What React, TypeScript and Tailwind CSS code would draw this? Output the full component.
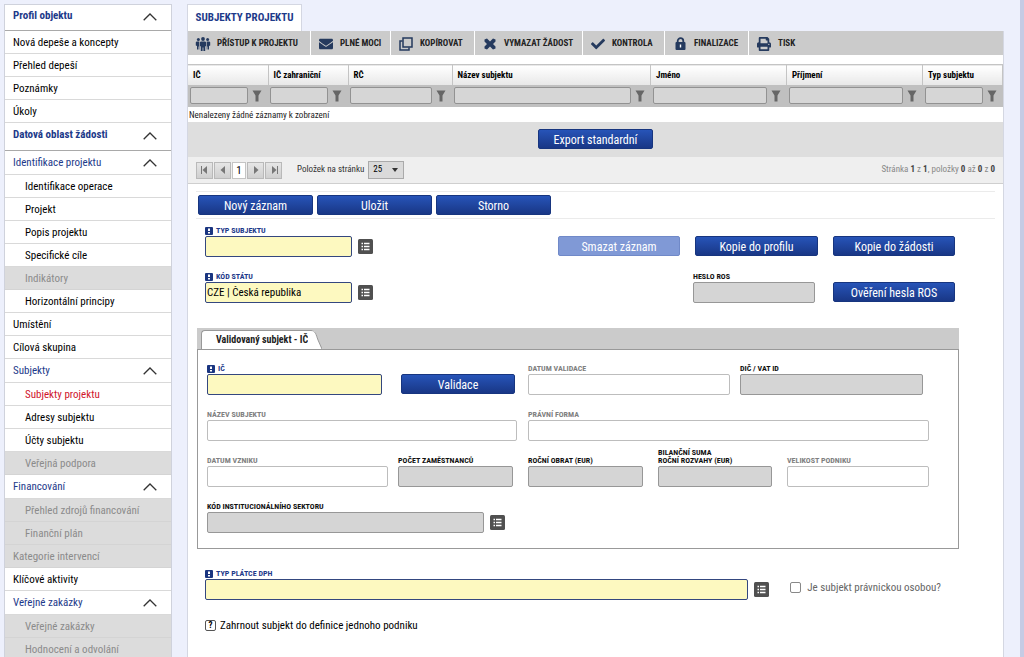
import { useId, type ReactNode } from "react";
import clsx from "clsx";
import { FaCheck, FaEnvelope, FaPrint } from "react-icons/fa";

type NavItem = {
  label: string;
  kind?: "section" | "group";
  child?: boolean;
  disabled?: boolean;
  active?: boolean;
};

const NAV: NavItem[] = [
  { label: "Profil objektu", kind: "section" },
  { label: "Nová depeše a koncepty" },
  { label: "Přehled depeší" },
  { label: "Poznámky" },
  { label: "Úkoly" },
  { label: "Datová oblast žádosti", kind: "section" },
  { label: "Identifikace projektu", kind: "group" },
  { label: "Identifikace operace", child: true },
  { label: "Projekt", child: true },
  { label: "Popis projektu", child: true },
  { label: "Specifické cíle", child: true },
  { label: "Indikátory", child: true, disabled: true },
  { label: "Horizontální principy", child: true },
  { label: "Umístění" },
  { label: "Cílová skupina" },
  { label: "Subjekty", kind: "group" },
  { label: "Subjekty projektu", child: true, active: true },
  { label: "Adresy subjektu", child: true },
  { label: "Účty subjektu", child: true },
  { label: "Veřejná podpora", child: true, disabled: true },
  { label: "Financování", kind: "group" },
  { label: "Přehled zdrojů financování", child: true, disabled: true },
  { label: "Finanční plán", child: true, disabled: true },
  { label: "Kategorie intervencí", disabled: true },
  { label: "Klíčové aktivity" },
  { label: "Veřejné zakázky", kind: "group" },
  { label: "Veřejné zakázky", child: true, disabled: true },
  { label: "Hodnocení a odvolání", child: true, disabled: true },
];

const COLUMNS = [
  { label: "IČ", width: "w-20" },
  { label: "IČ zahraniční", width: "w-20" },
  { label: "RČ", width: "w-26" },
  { label: "Název subjektu", width: "w-auto" },
  { label: "Jméno", width: "w-34" },
  { label: "Příjmení", width: "w-34" },
  { label: "Typ subjektu", width: "w-20" },
];

function PeopleIcon() {
  return (
    <svg viewBox="0 0 16 14" className="h-3.5 w-4" fill="currentColor" aria-hidden="true">
      <circle cx="3.4" cy="2.4" r="1.5" />
      <circle cx="12.6" cy="2.4" r="1.5" />
      <circle cx="8" cy="2" r="1.9" />
      <path d="M1.6 4.4h2.7v8.2H3.6V9.4h-.5v3.2H2V9L.8 8.6V5.3z" />
      <path d="M14.4 4.4h-2.7v8.2h.7V9.4h.5v3.2H14V9l1.2-.4V5.3z" />
      <path d="M5.8 4.4h4.4l.9.9v4h-.9V14H8.4v-3.6h-.8V14H5.8V9.3h-.9v-4z" />
    </svg>
  );
}

function CopyIcon() {
  return (
    <svg viewBox="0 0 14 14" className="size-3.5" fill="none" stroke="currentColor" strokeWidth="1.5" aria-hidden="true">
      <path d="M4 1h9v9H4z" />
      <path d="M3.500 4H1v9h9v-2.500" />
    </svg>
  );
}

function CrossIcon() {
  return (
    <svg viewBox="0 0 12 12" className="size-3" fill="currentColor" aria-hidden="true">
      <path d="M.5 1.500 3 .5l3 3 3-3 2.500 1v2L9 6l2.500 2.500v2l-2.500 1-3-3-3 3-2.500-1v-2L3 6 .5 3.500z" />
    </svg>
  );
}

function LockIcon() {
  return (
    <svg viewBox="0 0 11 13" className="h-[13px] w-[11px]" aria-hidden="true">
      <path d="M2.700 6V4a2.800 2.800 0 0 1 5.600 0v2" fill="none" stroke="currentColor" strokeWidth="1.800" />
      <rect x=".5" y="5" width="10" height="8" rx="1" fill="currentColor" />
      <path d="M4.800 7.500h1.400v3H4.800z" fill="#fff" />
    </svg>
  );
}

const TOOLS = [
  { label: "PŘÍSTUP K PROJEKTU", width: "w-[123px]", icon: <PeopleIcon /> },
  { label: "PLNÉ MOCI", width: "w-20", icon: <FaEnvelope className="size-3.5" /> },
  { label: "KOPÍROVAT", width: "w-21", icon: <CopyIcon /> },
  { label: "VYMAZAT ŽÁDOST", width: "w-27", icon: <CrossIcon /> },
  { label: "KONTROLA", width: "w-[82px]", icon: <FaCheck className="size-3.5" /> },
  { label: "FINALIZACE", width: "w-21", icon: <LockIcon /> },
  { label: "TISK", width: "w-16", icon: <FaPrint className="size-3.5" /> },
];

function Chevron() {
  return (
    <svg viewBox="0 0 14 8" className="h-2 w-3.5" fill="none" stroke="#333" strokeWidth="1.3" aria-hidden="true">
      <path d="M.7 7.300 7 1l6.300 6.300" />
    </svg>
  );
}

function Sidebar() {
  return (
    <nav className="w-[168px] shrink-0 border border-[#cfd2dc] bg-white text-[11px]">
      {NAV.map((item, i) =>
        item.kind ? (
          <button
            key={i}
            type="button"
            className={clsx(
              "flex w-full items-center justify-between border-b pr-3.5 pl-2 text-[#1d3a8a]",
              item.kind === "section" ? "border-[#a9a9a9] pb-0.5 font-bold" : "h-6 border-[#d9d9d9] pt-px",
              item.kind === "section" && (i === 0 ? "h-[26px]" : "h-7"),
            )}
          >
            {item.label}
            <Chevron />
          </button>
        ) : (
          <a
            key={i}
            href="#"
            className={clsx(
              "flex h-[23px] items-center border-b pt-0.5 whitespace-nowrap",
              item.child ? "pl-5" : "pl-2",
              item.disabled ? "border-[#d4d4d4] bg-[#dcdcdc] text-[#8b8b8b]" : "border-[#d9d9d9]",
              item.active && "text-[#d0142c]",
            )}
          >
            {item.label}
          </a>
        ),
      )}
    </nav>
  );
}

function Toolbar() {
  return (
    <div className="flex h-6 bg-[#cbcbcb] text-[9px] font-bold text-[#222]">
      {TOOLS.map((tool, i) => (
        <button
          key={tool.label}
          type="button"
          className={clsx(
            "flex items-center gap-1.5 pt-px pl-[7px] whitespace-nowrap",
            tool.width,
            i < TOOLS.length - 1 && "border-r border-white",
          )}
        >
          <span className="flex w-4 justify-center text-[#253a5e]">{tool.icon}</span>
          {tool.label}
        </button>
      ))}
    </div>
  );
}

function SubjectTable() {
  return (
    <table className="mt-[9px] w-full table-fixed border-collapse text-[9px]">
      <thead>
        <tr className="h-5 border-t border-[#c4c4c4] bg-linear-to-b from-white to-[#e8e8e8]">
          {COLUMNS.map((col) => (
            <th
              key={col.label}
              className={clsx(
                "border-r border-[#c4c4c4] p-0 pt-0.5 pl-[5px] text-left font-bold whitespace-nowrap",
                col.width,
              )}
            >
              {col.label}
            </th>
          ))}
        </tr>
        <tr className="h-[22px] bg-[#c0c0c0]">
          {COLUMNS.map((col) => (
            <td key={col.label} className="p-0 px-0.5">
              <div className="flex items-center gap-1">
                <input
                  aria-label={`Filtr ${col.label}`}
                  className="h-[17px] min-w-0 flex-1 rounded-xs border border-[#929292] bg-[#d6d6d6] px-1"
                />
                <button type="button" aria-label={`Filtrovat ${col.label}`} className="pr-1">
                  <svg viewBox="0 0 10 12" className="h-3 w-2.5" fill="#666" aria-hidden="true">
                    <path d="M.5.500h9L6.500 5.500v6h-3v-6z" />
                  </svg>
                </button>
              </div>
            </td>
          ))}
        </tr>
      </thead>
      <tbody>
        <tr className="h-[15px]">
          <td colSpan={COLUMNS.length} className="p-0 pt-px pl-px leading-[14px] text-[#222]">
            Nenalezeny žádné záznamy k zobrazení
          </td>
        </tr>
      </tbody>
    </table>
  );
}

function PagerButton({ label, path }: { label: string; path: string }) {
  return (
    <button
      type="button"
      aria-label={label}
      className="flex size-[17px] items-center justify-center border border-[#b9b9b9] bg-linear-to-b from-[#e6e6e6] to-[#cfcfcf]"
    >
      <svg viewBox="0 0 8 8" className="size-2" fill="#777" aria-hidden="true">
        <path d={path} />
      </svg>
    </button>
  );
}

function Pager() {
  const selectId = useId();
  return (
    <div className="flex h-[27px] items-center border-b border-[#cfcfcf] bg-[#efefef] px-2 pt-px text-[9px]">
      <div className="flex items-center gap-px">
        <PagerButton label="První" path="M0 0h1v8H0zM6 0v8L1.500 4z" />
        <PagerButton label="Předchozí" path="M6 0v8L1.500 4z" />
        <button type="button" className="h-[17px] w-3.5 border border-[#c4c4c4] bg-white text-[11px] leading-none">
          1
        </button>
        <PagerButton label="Další" path="M2 0v8l4.500-4z" />
        <PagerButton label="Poslední" path="M2 0v8l4.500-4zM7 0h1v8H7z" />
      </div>
      <label htmlFor={selectId} className="ml-[15px] text-[#333]">
        Položek na stránku
      </label>
      <div className="relative ml-1">
        <select
          id={selectId}
          className="block h-[18px] w-9 appearance-none border border-[#aaa] bg-[#dadada] pl-1 text-[9px]"
        >
          <option>25</option>
        </select>
        <svg viewBox="0 0 6 4" className="pointer-events-none absolute top-[7px] right-1.5 h-1 w-1.5" fill="#333" aria-hidden="true">
          <path d="M0 0h6L3 4z" />
        </svg>
      </div>
      <p className="ml-auto text-[#888]">
        Stránka <b className="text-[#444]">1</b> z <b className="text-[#444]">1</b>, položky{" "}
        <b className="text-[#444]">0</b> až <b className="text-[#444]">0</b> z <b className="text-[#444]">0</b>
      </p>
    </div>
  );
}

function ActionButton({ children, className, disabled }: { children: ReactNode; className?: string; disabled?: boolean }) {
  return (
    <button
      type="button"
      disabled={disabled}
      className={clsx(
        "h-5 rounded-xs border pt-0.5 text-[12px] leading-none whitespace-nowrap text-white",
        disabled
          ? "border-[#7089c8] bg-[#8099d6]"
          : "border-[#17357f] bg-linear-to-b from-[#2754b8] to-[#193786]",
        className,
      )}
    >
      {children}
    </button>
  );
}

type FieldProps = {
  label: ReactNode;
  tone?: "required" | "locked" | "plain";
  value?: string;
  className?: string;
};

function Field({ label, tone = "plain", value, className }: FieldProps) {
  const id = useId();
  return (
    <div className={clsx("flex flex-col justify-end", className)}>
      <label
        htmlFor={id}
        className={clsx(
          "flex items-center gap-[3px] text-[8px] leading-[8px] font-bold whitespace-nowrap",
          tone === "required" && "text-[#1d3a8a]",
          tone === "locked" && "text-[#111]",
          tone === "plain" && "text-[#808080]",
        )}
      >
        {tone === "required" && (
          <svg viewBox="0 0 8 8" className="size-2" aria-hidden="true">
            <rect width="8" height="8" rx="1" fill="#1a3580" />
            <path d="M3 1.500h2v2.500H3zM3 5h2v1.500H3z" fill="#fff" />
          </svg>
        )}
        <span>{label}</span>
      </label>
      <input
        id={id}
        defaultValue={value}
        className={clsx(
          "mt-px h-[21px] w-full rounded-xs border px-px pt-px text-[11px]",
          tone === "required" && "border-[#34477f] bg-[#fdf9c0]",
          tone === "locked" && "border-[#979797] bg-[#d5d5d5]",
          tone === "plain" && "border-[#bdbdbd] bg-white",
        )}
      />
    </div>
  );
}

function ListButton({ label }: { label: string }) {
  return (
    <button type="button" aria-label={label} className="mb-[3px] ml-1.5 shrink-0">
      <svg viewBox="0 0 15 15" className="block size-[15px]" aria-hidden="true">
        <rect width="15" height="15" rx="1.500" fill="#505050" />
        <path
          d="M3.500 4.500H5M3.500 7.500H5M3.500 10.500H5M6 4.500h5.500M6 7.500h5.500M6 10.500h5.500"
          stroke="#fff"
          strokeWidth="1.500"
        />
      </svg>
    </button>
  );
}

function ValidatedSubject() {
  return (
    <section className="mr-11 ml-[9px]">
      <div className="flex h-[21px] items-end bg-[#cbcbcb] pl-1">
        <h2 className="flex h-[19px] text-[10px] font-bold">
          <span className="flex items-center rounded-tl-sm border-t border-l border-[#999] bg-white pl-3.5 text-[#222]">
            Validovaný subjekt - IČ
          </span>
          <svg viewBox="0 0 14 19" className="h-[19px] w-3.5" aria-hidden="true">
            <path d="M0 0h3C8 0 8 4 10 10l4 9H0z" fill="#fff" />
            <path d="M0 .5h3c4.500 0 5 4 7 9.500l4 9" fill="none" stroke="#999" />
          </svg>
        </h2>
      </div>
      <div className="flex h-[200px] flex-col gap-4 border border-[#999] pt-[15px] pr-[29px] pl-[9px]">
        <div className="flex items-end">
          <Field label="IČ" tone="required" className="w-[175px]" />
          <ActionButton className="mb-px ml-[19px] w-[114px]">Validace</ActionButton>
          <Field label="DATUM VALIDACE" className="ml-[13px] flex-1" />
          <Field label="DIČ / VAT ID" tone="locked" className="mr-1.5 ml-2.5 w-[183px]" />
        </div>
        <div className="flex items-end gap-[11px]">
          <Field label="NÁZEV SUBJEKTU" className="w-[310px]" />
          <Field label="PRÁVNÍ FORMA" className="flex-1" />
        </div>
        <div className="flex h-[30px] items-end gap-[15px]">
          <div className="flex items-end gap-2.5">
            <Field label="DATUM VZNIKU" className="w-[181px]" />
            <Field label="POČET ZAMĚSTNANCŮ" tone="locked" className="w-[115px]" />
          </div>
          <Field label="ROČNÍ OBRAT (EUR)" tone="locked" className="w-[115px]" />
          <Field
            label={
              <>
                BILANČNÍ SUMA
                <br />
                ROČNÍ ROZVAHY (EUR)
              </>
            }
            tone="locked"
            className="w-[114px]"
          />
          <Field label="VELIKOST PODNIKU" className="flex-1" />
        </div>
        <div className="flex items-end">
          <Field label="KÓD INSTITUCIONÁLNÍHO SEKTORU" tone="locked" className="w-[277px]" />
          <ListButton label="Vybrat kód sektoru" />
        </div>
      </div>
    </section>
  );
}

export default function App() {
  return (
    <div className="flex h-screen overflow-hidden border-r-4 border-[#c6cbe4] bg-[#edf0fc] pr-4 pl-1 font-['Roboto_Condensed','Liberation_Sans_Narrow',Roboto,sans-serif] text-black">
      <div className="pt-1">
        <Sidebar />
      </div>
      <main className="ml-[15px] flex min-w-0 flex-1 flex-col pt-1">
        <h1 className="flex h-[27px] w-[115px] shrink-0 items-center justify-center border border-b-0 border-[#d4d7e2] bg-white pt-px text-[11px] font-bold whitespace-nowrap text-[#1d3a8a]">
          SUBJEKTY PROJEKTU
        </h1>
        <div className="flex-1 border-x border-[#d4d7e2] bg-white">
          <Toolbar />
          <SubjectTable />
          <div className="flex h-[35px] items-center justify-center bg-[#dedede]">
            <ActionButton className="w-[115px]">Export standardní</ActionButton>
          </div>
          <Pager />

          <div className="mx-2 mt-[7px] flex h-7 items-center gap-1 border-y border-[#ebebeb] pl-0.5">
            <ActionButton className="w-[115px]">Nový záznam</ActionButton>
            <ActionButton className="w-[115px]">Uložit</ActionButton>
            <ActionButton className="w-[115px]">Storno</ActionButton>
          </div>

          <div className="mt-2 mr-12 ml-[17px] flex h-[30px] items-end">
            <Field label="TYP SUBJEKTU" tone="required" className="w-[147px]" />
            <ListButton label="Vybrat typ subjektu" />
            <div className="mb-px ml-auto flex gap-[15px]">
              <ActionButton disabled className="w-[122px]">Smazat záznam</ActionButton>
              <ActionButton className="w-[123px]">Kopie do profilu</ActionButton>
              <ActionButton className="w-[122px]">Kopie do žádosti</ActionButton>
            </div>
          </div>
          <div className="mt-4 mr-12 ml-[17px] flex h-[30px] items-end">
            <Field label="KÓD STÁTU" tone="required" value="CZE | Česká republika" className="w-[147px]" />
            <ListButton label="Vybrat kód státu" />
            <div className="ml-auto flex items-end gap-[18px]">
              <Field label="HESLO ROS" tone="locked" className="w-[122px]" />
              <ActionButton className="mb-px w-[122px]">Ověření hesla ROS</ActionButton>
            </div>
          </div>

          <div className="mt-[25px]">
            <ValidatedSubject />
          </div>

          <div className="mt-[21px] mr-[62px] ml-[17px] flex h-[30px] items-end">
            <Field label="TYP PLÁTCE DPH" tone="required" className="flex-1" />
            <ListButton label="Vybrat typ plátce DPH" />
            <label className="mb-1 ml-[21px] flex items-center gap-1.5 text-[11px] leading-4 whitespace-nowrap text-[#666]">
              <input type="checkbox" className="size-[11px] appearance-none rounded-xs border border-[#888] bg-white" />
              Je subjekt právnickou osobou?
            </label>
          </div>
          <p className="mt-[18px] ml-[17px] flex items-center gap-1 text-[11px] leading-4">
            <span className="flex size-[11px] items-center justify-center rounded-xs border border-[#555] text-[9px] leading-none font-bold">
              ?
            </span>
            Zahrnout subjekt do definice jednoho podniku
          </p>
        </div>
      </main>
    </div>
  );
}
